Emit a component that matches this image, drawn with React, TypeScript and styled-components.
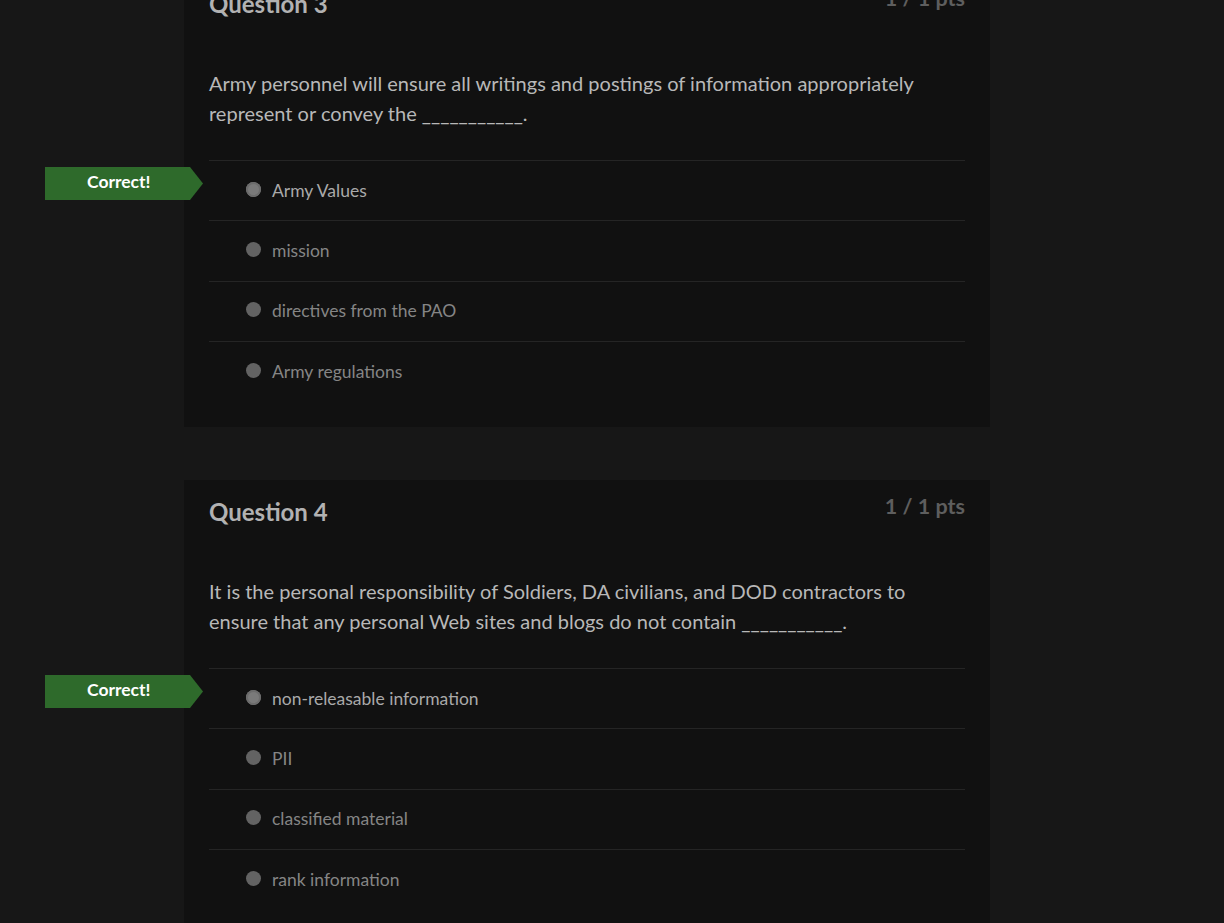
import React from 'react';
import styled, { createGlobalStyle } from 'styled-components';

const GlobalStyle = createGlobalStyle`
    html, body {
        margin: 0;
        padding: 0;
        background-color: #171717;
        overflow: hidden;
    }
    body {
        font-family: Lato, "Open Sans", "Liberation Sans", sans-serif;
        height: 923px;
    }
`;

const Page = styled.div`
    display: flex;
    flex-direction: column;
    gap: 53px;
    width: 806px;
    margin: -28px 0 0 184px;
`;

const Card = styled.section`
    background-color: #111111;
    padding: 0 25px 25px;
    height: 455px;
    box-sizing: border-box;
`;

const Header = styled.header`
    display: flex;
    justify-content: space-between;
    align-items: flex-start;
    padding-top: 20px;
`;

const Title = styled.h2`
    margin: 0;
    font-size: 24px;
    line-height: 24px;
    font-weight: 700;
    color: #b2b2b2;
`;

const Points = styled.span`
    font-size: 21.5px;
    line-height: 22px;
    font-weight: 700;
    color: #5e5e5e;
    margin-top: -5px;
`;

const Prompt = styled.p`
    margin: 52px 0 32px;
    font-size: 20px;
    line-height: 30px;
    color: #b8b8b8;
`;

const AnswerList = styled.div`
    display: flex;
    flex-direction: column;
`;

interface AnswerRowProps {
    $selected?: boolean;
};

const AnswerRow = styled.div<AnswerRowProps>`
    position: relative;
    display: flex;
    align-items: center;
    gap: 11px;
    height: 60.3px;
    padding-left: 37px;
    border-top: 1px solid #252525;
    box-sizing: border-box;
    font-size: 17.5px;
    color: ${({ $selected }) => ($selected ? '#a9a9a9' : '#858585')};
`;

const Radio = styled.span<AnswerRowProps>`
    width: 15px;
    height: 15px;
    border-radius: 50%;
    margin-top: -3px;
    background-color: ${({ $selected }) => ($selected ? '#7a7a7a' : '#636363')};
    box-shadow: ${({ $selected }) => ($selected ? 'inset 0 0 0 2px #6c6c6c' : 'none')};
`;

const AnswerText = styled.span`
    line-height: 20px;
`;

const CorrectBadge = styled.div`
    position: absolute;
    left: -164px;
    top: 6px;
    width: 158px;
    height: 33px;
    display: flex;
    align-items: center;
    padding-left: 42px;
    box-sizing: border-box;
    background-color: #2e6a2b;
    clip-path: polygon(0 0, 145px 0, 158px 50%, 145px 100%, 0 100%);
    color: #ffffff;
    font-size: 17.5px;
    font-weight: 700;
    line-height: 1;
    padding-bottom: 3px;
`;

interface Question {
    number: number;
    prompt: string[];
    answers: string[];
    correct: number;
};

const questions: Question[] = [
    {
        number: 3,
        prompt: [
            'Army personnel will ensure all writings and postings of information appropriately',
            'represent or convey the ___________.',
        ],
        answers: ['Army Values', 'mission', 'directives from the PAO', 'Army regulations'],
        correct: 0,
    },
    {
        number: 4,
        prompt: [
            'It is the personal responsibility of Soldiers, DA civilians, and DOD contractors to',
            'ensure that any personal Web sites and blogs do not contain ___________.',
        ],
        answers: ['non-releasable information', 'PII', 'classified material', 'rank information'],
        correct: 0,
    },
];

const QuestionCard: React.FC<{ question: Question }> = ({ question }) => (
    <Card>
        <Header>
            <Title>Question {question.number}</Title>
            <Points>1 / 1 pts</Points>
        </Header>
        <Prompt>
            {question.prompt[0]}
            <br />
            {question.prompt[1]}
        </Prompt>
        <AnswerList>
            {question.answers.map((answer, i) => (
                <AnswerRow key={answer} $selected={i === question.correct}>
                    {i === question.correct && <CorrectBadge>Correct!</CorrectBadge>}
                    <Radio $selected={i === question.correct} />
                    <AnswerText>{answer}</AnswerText>
                </AnswerRow>
            ))}
        </AnswerList>
    </Card>
);

const App: React.FC = () => (
    <>
        <GlobalStyle />
        <Page>
            {questions.map((q) => (
                <QuestionCard key={q.number} question={q} />
            ))}
        </Page>
    </>
);

export default App;
